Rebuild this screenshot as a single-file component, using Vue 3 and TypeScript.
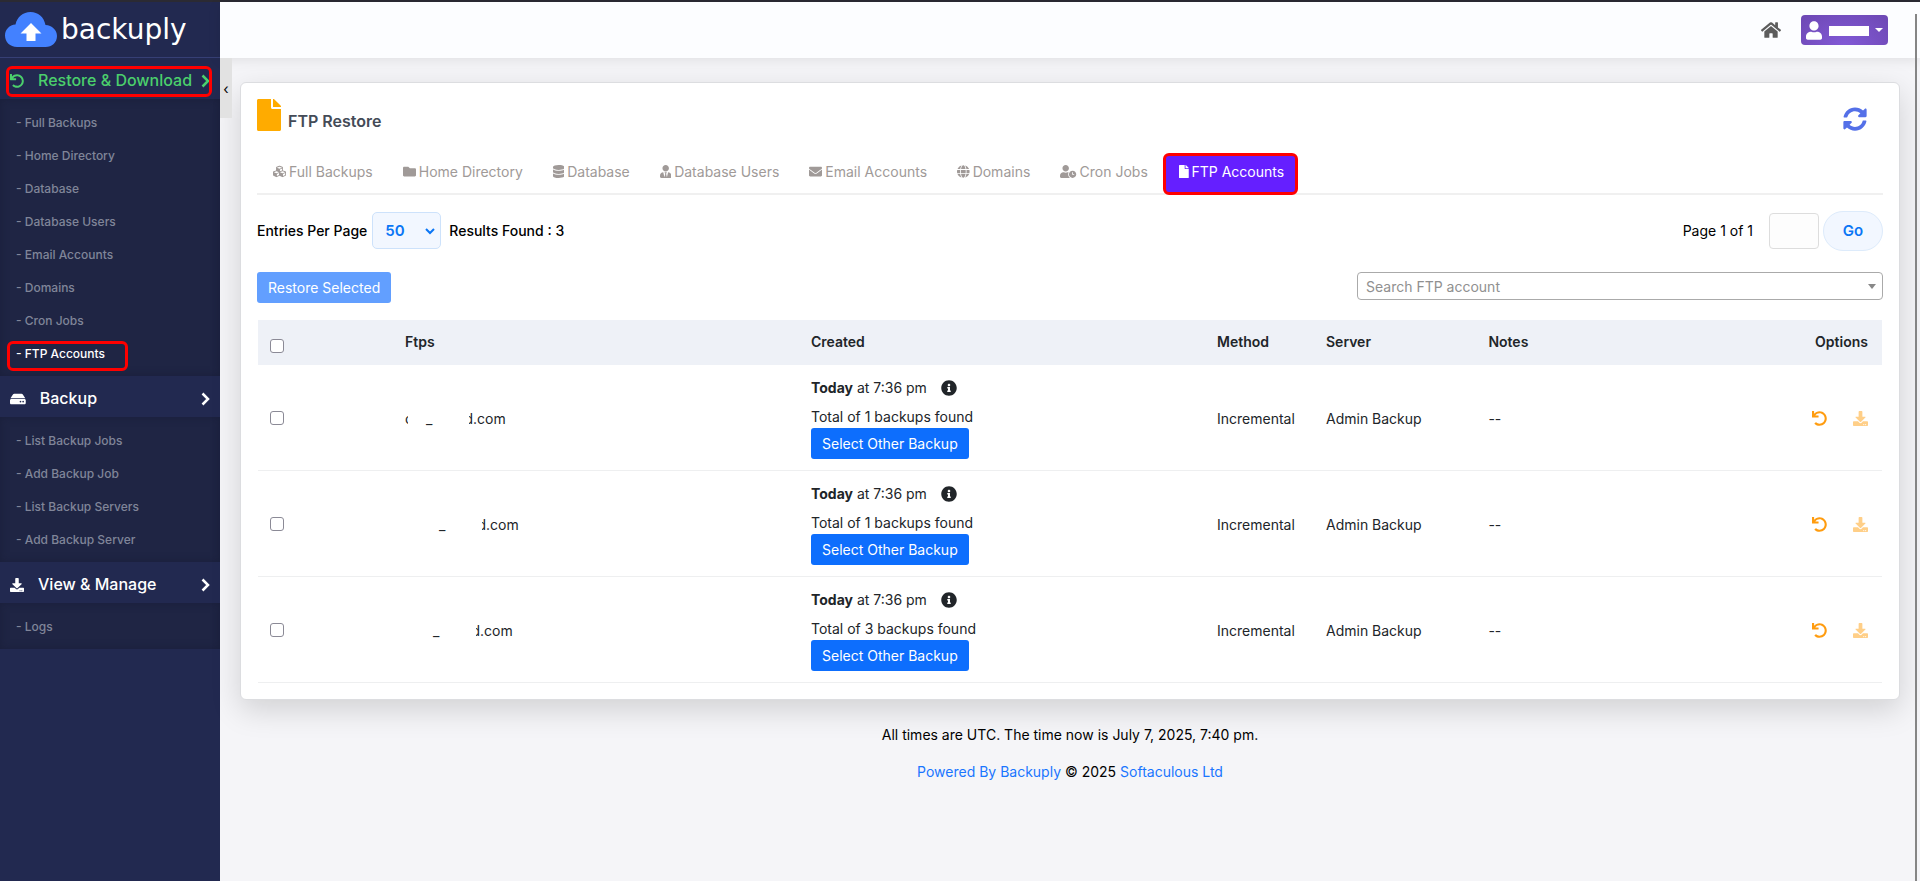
<script setup lang="ts">
import { ref } from 'vue'

interface Icon { w: number; d: string }
interface Group { title: string; icon: string; green?: boolean; items: string[] }
interface Row { lead: string; total: number; stub: boolean }

const icons: Record<string, Icon> = {
  undo: { w: 512, d: 'M212.333 224.333H12c-6.627 0-12-5.373-12-12V12C0 5.373 5.373 0 12 0h48c6.627 0 12 5.373 12 12v78.112C117.773 39.279 184.26 7.47 258.175 8.007c136.906.994 246.448 111.623 246.157 248.532C504.041 393.258 393.12 504 256.333 504c-64.089 0-122.496-24.313-166.51-64.215-5.099-4.622-5.334-12.554-.467-17.42l33.967-33.967c4.474-4.474 11.662-4.717 16.401-.525C170.76 415.336 211.58 432 256.333 432c97.268 0 176-78.716 176-176 0-97.267-78.716-176-176-176-58.496 0-110.28 28.476-142.274 72.333h98.274c6.627 0 12 5.373 12 12v48c0 6.627-5.373 12-12 12z' },
  hdd: { w: 576, d: 'M576 304v96c0 26.51-21.49 48-48 48H48c-26.51 0-48-21.49-48-48v-96c0-26.51 21.49-48 48-48h480c26.51 0 48 21.49 48 48zm-48-80a79.557 79.557 0 0 1 30.777 6.165L462.25 85.374A48.003 48.003 0 0 0 422.311 64H153.689a48 48 0 0 0-39.938 21.374L17.223 230.165A79.557 79.557 0 0 1 48 224h480zm-48 96c-17.673 0-32 14.327-32 32s14.327 32 32 32 32-14.327 32-32-14.327-32-32-32zm-96 0c-17.673 0-32 14.327-32 32s14.327 32 32 32 32-14.327 32-32-14.327-32-32-32z' },
  download: { w: 512, d: 'M216 0h80c13.3 0 24 10.7 24 24v168h87.7c17.8 0 26.7 21.5 14.1 34.1L269.7 378.3c-7.5 7.5-19.8 7.5-27.3 0L90.1 226.1c-12.6-12.6-3.7-34.1 14.1-34.1H192V24c0-13.3 10.7-24 24-24zm296 376v112c0 13.3-10.7 24-24 24H24c-13.3 0-24-10.7-24-24V376c0-13.3 10.7-24 24-24h146.7l49 49c20.1 20.1 52.5 20.1 72.6 0l49-49H488c13.3 0 24 10.7 24 24zm-124 88c0-11-9-20-20-20s-20 9-20 20 9 20 20 20 20-9 20-20zm64 0c0-11-9-20-20-20s-20 9-20 20 9 20 20 20 20-9 20-20z' },
  file: { w: 384, d: 'M224 136V0H24C10.7 0 0 10.7 0 24v464c0 13.3 10.7 24 24 24h336c13.3 0 24-10.7 24-24V160H248c-13.2 0-24-10.8-24-24zm160-14.1v6.1H256V0h6.1c6.4 0 12.5 2.5 17 7l97.9 98c4.5 4.5 7 10.6 7 16.9z' },
  folder: { w: 512, d: 'M464 128H272l-64-64H48C21.49 64 0 85.49 0 112v288c0 26.51 21.49 48 48 48h416c26.51 0 48-21.49 48-48V176c0-26.51-21.49-48-48-48z' },
  database: { w: 448, d: 'M448 73.143v45.714C448 159.143 347.667 192 224 192S0 159.143 0 118.857V73.143C0 32.857 100.333 0 224 0s224 32.857 224 73.143zM448 176v102.857C448 319.143 347.667 352 224 352S0 319.143 0 278.857V176c48.125 33.143 136.208 48.572 224 48.572S399.874 209.143 448 176zm0 160v102.857C448 479.143 347.667 512 224 512S0 479.143 0 438.857V336c48.125 33.143 136.208 48.572 224 48.572S399.874 369.143 448 336z' },
  userTie: { w: 448, d: 'M224 256c70.7 0 128-57.3 128-128S294.7 0 224 0 96 57.3 96 128s57.3 128 128 128zm95.8 32.6L272 480l-32-136 32-56h-96l32 56-32 136-47.8-191.4C56.9 292 0 350.3 0 422.4V464c0 26.5 21.5 48 48 48h352c26.5 0 48-21.5 48-48v-41.6c0-72.1-56.9-130.4-128.2-133.8z' },
  envelope: { w: 512, d: 'M502.3 190.8c3.9-3.1 9.7-.2 9.7 4.7V400c0 26.5-21.5 48-48 48H48c-26.5 0-48-21.5-48-48V195.6c0-5 5.7-7.8 9.7-4.7 22.4 17.4 52.1 39.5 154.1 113.6 21.1 15.4 56.7 47.8 92.2 47.6 35.7.3 72-32.8 92.3-47.6 102-74.1 131.6-96.3 154-113.7zM256 320c23.2.4 56.6-29.2 73.4-41.4 132.7-96.3 142.8-104.7 173.4-128.7 5.8-4.5 9.2-11.5 9.2-18.9v-19c0-26.5-21.5-48-48-48H48c-26.5 0-48 21.5-48 48v19c0 7.4 3.4 14.3 9.2 18.9 30.6 23.9 40.7 32.4 173.4 128.7 16.8 12.2 50.2 41.8 73.4 41.4z' },
  globe: { w: 496, d: 'M336.5 160C322 70.7 287.8 8 248 8s-74 62.7-88.5 152h177zM152 256c0 22.2 1.2 43.5 3.3 64h185.3c2.1-20.5 3.3-41.8 3.3-64s-1.2-43.5-3.3-64H155.3c-2.1 20.5-3.3 41.8-3.3 64zm324.7-96c-28.6-67.9-86.5-120.4-158-141.6 24.4 33.8 41.2 84.7 50 141.6h108zM177.2 18.4C105.8 39.6 47.8 92.1 19.3 160h108c8.7-56.9 25.5-107.8 49.9-141.6zM487.4 192H372.7c2.1 21 3.3 42.5 3.3 64s-1.2 43-3.3 64h114.6c5.5-20.5 8.6-41.8 8.6-64s-3.1-43.5-8.5-64zM120 256c0-21.5 1.2-43 3.3-64H8.6C3.2 212.5 0 233.8 0 256s3.2 43.5 8.6 64h114.6c-2-21-3.2-42.5-3.2-64zm39.5 96c14.5 89.3 48.7 152 88.5 152s74-62.7 88.5-152h-177zm159.3 141.6c71.4-21.2 129.4-73.7 158-141.6h-108c-8.8 56.9-25.6 107.8-50 141.6zM19.3 352c28.6 67.9 86.5 120.4 158 141.6-24.4-33.8-41.2-84.7-50-141.6h-108z' },
  userClock: { w: 640, d: 'M496 224c-79.6 0-144 64.4-144 144s64.4 144 144 144 144-64.4 144-144-64.4-144-144-144zm64 150.3c0 5.3-4.4 9.7-9.7 9.7h-60.6c-5.3 0-9.7-4.4-9.7-9.7v-76.6c0-5.3 4.4-9.7 9.7-9.7h12.6c5.3 0 9.7 4.4 9.7 9.7V352h38.3c5.3 0 9.7 4.4 9.7 9.7v12.6zM320 368c0-27.8 6.7-54.1 18.2-77.5-8-1.5-16.2-2.5-24.6-2.5h-16.7c-22.2 10.2-46.9 16-72.9 16s-50.6-5.8-72.9-16h-16.7C60.2 288 0 348.2 0 422.4V464c0 26.5 21.5 48 48 48h347.1c-45.3-31.9-75.1-84.5-75.1-144zm-96-112c70.7 0 128-57.3 128-128S294.7 0 224 0 96 57.3 96 128s57.3 128 128 128z' },
  user: { w: 448, d: 'M224 256c70.7 0 128-57.3 128-128S294.7 0 224 0 96 57.3 96 128s57.3 128 128 128zm89.6 32h-16.7c-22.2 10.2-46.9 16-72.9 16s-50.6-5.8-72.9-16h-16.7C60.2 288 0 348.2 0 422.4V464c0 26.5 21.5 48 48 48h352c26.5 0 48-21.5 48-48v-41.6c0-74.2-60.2-134.4-134.4-134.4z' },
  info: { w: 512, d: 'M256 8C119.043 8 8 119.083 8 256c0 136.997 111.043 248 248 248s248-111.003 248-248C504 119.083 392.957 8 256 8zm0 110c23.196 0 42 18.804 42 42s-18.804 42-42 42-42-18.804-42-42 18.804-42 42-42zm56 254c0 6.627-5.373 12-12 12h-88c-6.627 0-12-5.373-12-12v-24c0-6.627 5.373-12 12-12h12v-64h-12c-6.627 0-12-5.373-12-12v-24c0-6.627 5.373-12 12-12h64c6.627 0 12 5.373 12 12v100h12c6.627 0 12 5.373 12 12v24z' },
  home: { w: 576, d: 'M280.37 148.26L96 300.11V464a16 16 0 0 0 16 16l112.06-.29a16 16 0 0 0 15.92-16V368a16 16 0 0 1 16-16h64a16 16 0 0 1 16 16v95.64a16 16 0 0 0 16 16.05L464 480a16 16 0 0 0 16-16V300L295.67 148.26a12.19 12.19 0 0 0-15.3 0zM571.6 251.47L488 182.56V44.05a12 12 0 0 0-12-12h-56a12 12 0 0 0-12 12v72.61L318.47 43a48 48 0 0 0-61 0L4.34 251.47a12 12 0 0 0-1.6 16.9l25.5 31A12 12 0 0 0 45.15 301l235.22-193.74a12.19 12.19 0 0 1 15.3 0L530.9 301a12 12 0 0 0 16.9-1.6l25.5-31a12 12 0 0 0-1.7-16.93z' },
  sync: { w: 512, d: 'M370.72 133.28C339.458 104.008 298.888 87.962 255.848 88c-77.458.068-144.328 53.178-162.791 126.85-1.344 5.363-6.122 9.15-11.651 9.15H24.103c-7.498 0-13.194-6.807-11.807-14.176C33.933 94.924 134.813 8 256 8c66.448 0 126.791 26.136 171.315 68.685L463.03 40.97C478.149 25.851 504 36.559 504 57.941V192c0 13.255-10.745 24-24 24H345.941c-21.382 0-32.09-25.851-16.971-40.971l41.75-41.749zM32 296h134.059c21.382 0 32.09 25.851 16.971 40.971l-41.75 41.75c31.262 29.273 71.835 45.319 114.876 45.28 77.418-.07 144.315-53.144 162.787-126.849 1.344-5.363 6.122-9.15 11.651-9.15h57.304c7.498 0 13.194 6.807 11.807 14.176C478.067 417.076 377.187 504 256 504c-66.448 0-126.791-26.136-171.315-68.685L48.97 471.03C33.851 486.149 8 475.441 8 454.059V320c0-13.255 10.745-24 24-24z' },
  cubes: { w: 512, d: 'M488.6 250.2L392 214V105.5c0-15-9.3-28.4-23.4-33.7l-100-37.5c-8.1-3.1-17.1-3.1-25.3 0l-100 37.5c-14.1 5.3-23.4 18.7-23.4 33.7V214l-96.6 36.2C9.3 255.5 0 268.9 0 283.9V394c0 13.6 7.7 26.1 19.9 32.2l100 50c10.1 5.1 22.1 5.1 32.2 0l103.9-52 103.9 52c10.1 5.1 22.1 5.1 32.2 0l100-50c12.2-6.1 19.9-18.6 19.9-32.2V283.9c0-15-9.3-28.4-23.4-33.7zM358 214.8l-85 31.9v-68.2l85-37v73.3zM154 104.1l102-38.2 102 38.2v.6l-102 41.4-102-41.4v-.6zm84 291.1l-85 42.5v-79.1l85-38.8v75.4zm0-112l-102 41.4-102-41.4v-.6l102-38.2 102 38.2v.6zm240 112l-85 42.5v-79.1l85-38.8v75.4zm0-112l-102 41.4-102-41.4v-.6l102-38.2 102 38.2v.6z' },
}
const box = (name: string) => `0 0 ${icons[name].w} 512`

const groups: Group[] = [
  { title: 'Restore & Download', icon: 'undo', green: true, items: ['Full Backups', 'Home Directory', 'Database', 'Database Users', 'Email Accounts', 'Domains', 'Cron Jobs', 'FTP Accounts'] },
  { title: 'Backup', icon: 'hdd', items: ['List Backup Jobs', 'Add Backup Job', 'List Backup Servers', 'Add Backup Server'] },
  { title: 'View & Manage', icon: 'download', items: ['Logs'] },
]
const current = 'FTP Accounts'

const tabs = [
  { label: 'Full Backups', icon: 'cubes' },
  { label: 'Home Directory', icon: 'folder' },
  { label: 'Database', icon: 'database' },
  { label: 'Database Users', icon: 'userTie' },
  { label: 'Email Accounts', icon: 'envelope' },
  { label: 'Domains', icon: 'globe' },
  { label: 'Cron Jobs', icon: 'userClock' },
  { label: 'FTP Accounts', icon: 'file' },
]

const rows: Row[] = [
  { lead: 'near', total: 1, stub: true },
  { lead: 'far', total: 1, stub: false },
  { lead: 'mid', total: 3, stub: false },
]

const perPage = ref('50')
const pageNo = ref('')
const account = ref('')
</script>

<template>
  <div class="app">
    <aside class="sidebar">
      <a class="brand" href="#">
        <svg class="cloud" viewBox="0 0 52 36" aria-hidden="true">
          <path fill="#4381ff" d="M12 35C5 35 0 30 0 23.500C0 17.500 4.500 13 10.500 12.500C12 5 18 0 25.500 0C33 0 39 5 40.500 13C47 13.500 52 18 52 24C52 30.500 47 35 40.500 35Z" />
          <path fill="#fff" d="M26 11L36.500 21.500H30.500V29H21.500V21.500H15.500Z" />
        </svg>
        <span>backuply</span>
      </a>
      <nav>
        <section v-for="g in groups" :key="g.title">
          <button type="button" class="group" :class="{ green: g.green, marked: g.green }">
            <svg class="gicon" :viewBox="box(g.icon)" aria-hidden="true"><path :d="icons[g.icon].d" /></svg>
            <span class="gtitle">{{ g.title }}</span>
            <svg class="chev" viewBox="0 0 9 14" aria-hidden="true"><path d="M1.500 1.500L7 7L1.500 12.500" /></svg>
          </button>
          <ul>
            <li v-for="i in g.items" :key="i">
              <a href="#" :class="{ current: i === current, marked: i === current }">- {{ i }}</a>
            </li>
          </ul>
        </section>
      </nav>
    </aside>

    <div class="main">
      <header class="topbar">
        <a href="#" class="home" aria-label="Home"><svg :viewBox="box('home')"><path :d="icons.home.d" /></svg></a>
        <button type="button" class="account" aria-label="Account menu">
          <svg :viewBox="box('user')"><path :d="icons.user.d" /></svg>
          <span class="masked"></span>
          <span class="caret"></span>
        </button>
      </header>
      <button type="button" class="collapse" aria-label="Collapse sidebar">‹</button>

      <main class="card">
        <div class="head">
          <h1><svg :viewBox="box('file')" aria-hidden="true"><path :d="icons.file.d" /></svg><span>FTP Restore</span></h1>
          <button type="button" class="refresh" aria-label="Refresh"><svg :viewBox="box('sync')"><path :d="icons.sync.d" /></svg></button>
        </div>

        <nav class="tabs">
          <a v-for="t in tabs" :key="t.label" href="#" :class="{ active: t.label === current }">
            <svg :viewBox="box(t.icon)" aria-hidden="true"><path :d="icons[t.icon].d" /></svg><span>{{ t.label }}</span>
          </a>
        </nav>

        <div class="bar paging">
          <div class="entries">
            <label for="per-page">Entries Per Page</label>
            <span class="pick">
              <select id="per-page" v-model="perPage"><option>10</option><option>50</option><option>100</option></select>
              <svg viewBox="0 0 10 7" aria-hidden="true"><path d="M1 1L5 5L9 1" /></svg>
            </span>
            <span>Results Found : 3</span>
          </div>
          <form class="pager" @submit.prevent>
            <label for="page-no">Page 1 of 1</label>
            <input id="page-no" v-model="pageNo" type="text">
            <button type="submit">Go</button>
          </form>
        </div>

        <div class="bar actions">
          <button type="button" class="primary" disabled>Restore Selected</button>
          <span class="search">
            <select v-model="account" aria-label="Search FTP account"><option value="">Search FTP account</option></select>
            <span class="caret"></span>
          </span>
        </div>

        <div class="list">
          <table>
            <colgroup><col class="c-check"><col class="c-wide"><col class="c-wide"><col class="c-method"><col class="c-server"><col><col class="c-opts"></colgroup>
            <thead>
              <tr>
                <th><input type="checkbox" aria-label="Select all"></th>
                <th>Ftps</th><th>Created</th><th>Method</th><th>Server</th><th>Notes</th><th class="right">Options</th>
              </tr>
            </thead>
            <tbody>
              <tr v-for="(r, n) in rows" :key="n">
                <td><input type="checkbox" :aria-label="`Select row ${n + 1}`"></td>
                <td>
                  <span class="ftp">
                    <span v-if="r.stub" class="stub">c</span>
                    <span class="under" :class="r.lead">_</span>
                    <span class="domain">d.com</span>
                  </span>
                </td>
                <td>
                  <p class="when"><span><b>Today</b> at 7:36 pm</span><svg :viewBox="box('info')" aria-hidden="true"><path :d="icons.info.d" /></svg></p>
                  <p class="found">Total of {{ r.total }} backups found</p>
                  <button type="button" class="primary">Select Other Backup</button>
                </td>
                <td>Incremental</td>
                <td>Admin Backup</td>
                <td>--</td>
                <td class="right">
                  <span class="opts">
                    <button type="button" aria-label="Restore"><svg :viewBox="box('undo')"><path :d="icons.undo.d" /></svg></button>
                    <button type="button" aria-label="Download" disabled><svg :viewBox="box('download')"><path :d="icons.download.d" /></svg></button>
                  </span>
                </td>
              </tr>
            </tbody>
          </table>
        </div>
      </main>

      <footer>
        <p>All times are UTC. The time now is July 7, 2025, 7:40 pm.</p>
        <p><a href="#">Powered By Backuply</a> © 2025 <a href="#">Softaculous Ltd</a></p>
      </footer>
    </div>
    <span class="scroll-thumb"></span>
  </div>
</template>

<style>
body { background: #f5f5f8; }
</style>

<style scoped>
.app, .app * { box-sizing: border-box; }
.app {
  position: relative;
  display: flex;
  min-height: 100vh;
  border-top: 2px solid #2b2a33;
  font: 14px/21px Inter, "Open Sans", sans-serif;
  color: #000;
}
.app button, .app input, .app select { font: inherit; }
button { margin: 0; padding: 0; border: 0; background: none; color: inherit; cursor: pointer; }
a { color: #1a76ff; text-decoration: none; }
p, ul, h1 { margin: 0; padding: 0; }
svg { display: block; fill: currentColor; }

.sidebar { flex: 0 0 220px; background: #222950; color: #fff; }
.brand { display: flex; align-items: center; gap: 4px; height: 56px; padding: 0 5px; border-bottom: 1px solid #363f75; color: #fff; font: 28px/32px "DejaVu Sans", sans-serif; }
.cloud { width: 52px; height: 36px; }
.app .group { position: relative; display: flex; align-items: center; width: 100%; height: 41px; padding: 4px 10px 0; font-size: 16px; font-weight: 500; text-align: left; }
.group.green { color: #4bcf6c; }
.gicon { height: 14px; }
.gtitle { flex: 1; padding-left: 14px; }
.chev { width: 9px; height: 14px; fill: none; stroke: currentColor; stroke-width: 2.500; }
ul { list-style: none; padding: 7px 0 6px; background: #1f2544; box-shadow: inset 0 0 8px #1a1f3b; }
li { height: 33px; padding-left: 16px; line-height: 33px; font-size: 12px; font-weight: 500; }
li a { position: relative; color: #808599; }
li a.current { color: #fff; }
.marked::after { content: ""; position: absolute; border: 3px solid #f00; border-radius: 6px; pointer-events: none; }
.group.marked::after { inset: 8px 8px 2px 6px; }
li .marked::after { inset: -5px -23px -10px -9px; }

.main { position: relative; flex: 1; min-width: 0; }
.topbar { display: flex; align-items: center; justify-content: flex-end; gap: 20px; height: 56px; padding-right: 32px; background: #fcfdff; box-shadow: 0 2px 12px #00000018; }
.home { color: #5c5c5c; }
.home svg { width: 20px; height: 18px; }
.account { display: flex; align-items: center; gap: 6px; height: 30px; padding: 0 5px; border-radius: 4px; color: #fff; background: radial-gradient(ellipse at bottom, #8259d6, #6d48b3); }
.account svg { width: 16px; height: 19px; }
.masked { width: 40px; height: 10px; margin: 2px 0 0 1px; background: #fff; }
.caret { border: 4px solid transparent; border-top-color: currentColor; border-bottom: 0; }
.collapse { position: absolute; top: 56px; left: 0; width: 12px; height: 60px; background: #e2e2e2; color: #000; font-weight: 700; }

.card { margin: 24px 20px 0; padding: 16px; border: 1px solid #dcdde0; border-radius: 6px; background: #fff; box-shadow: 0 10px 30px #00000026; }
.head { display: flex; align-items: flex-start; justify-content: space-between; height: 54px; }
h1 { display: flex; align-items: flex-start; gap: 7px; color: #444b57; font-size: 16px; font-weight: 600; line-height: 21px; }
h1 span { padding-top: 12px; }
h1 svg { width: 24px; height: 32px; color: #ffab00; }
.refresh { margin: 8px 16px 0 0; color: #5470e8; }
.refresh svg { width: 24px; height: 24px; }

.tabs { display: flex; padding-left: 1px; border-bottom: 2px solid #f0f0f0; }
.tabs a { display: flex; align-items: center; gap: 3px; height: 40px; padding: 0 15px 3px; color: #a09a98; }
.tabs svg { height: 13px; }
.tabs .active { height: 42px; margin-bottom: -2px; padding: 0 11px 5px 13px; border: 3px solid #f00; border-radius: 6px; background: #651fff; color: #fff; }

.bar { display: flex; align-items: center; justify-content: space-between; }
.paging { height: 77px; padding-bottom: 6px; }
.entries { display: flex; align-items: center; gap: 5px; font-weight: 500; }
.pick { position: relative; margin-right: 3px; }
.pick select { display: block; appearance: none; width: 69px; height: 37px; padding: 0 12px; border: 1px solid #cde2fb; border-radius: 5px; background: #f2f7ff; color: #0a76f5; font-size: 15px; font-weight: 600; }
.pick svg { position: absolute; top: 16px; right: 6px; width: 10px; height: 7px; fill: none; stroke: #0a76f5; stroke-width: 2; pointer-events: none; }
.pager { display: flex; align-items: center; gap: 4px; }
.pager label { margin-right: 12px; }
.pager input { width: 50px; height: 36px; border: 1px solid #ddd; border-radius: 4px; background: #fdfdfd; }
.app .pager button { width: 60px; height: 40px; border: 1px solid #ddebfb; border-radius: 20px; background: #f2f7ff; color: #0a76f5; font-size: 15px; font-weight: 600; }
.actions { align-items: flex-start; height: 48px; }
.primary { height: 31px; padding: 0 11px; border-radius: 3px; background: #0d6efd; color: #fff; }
.primary:disabled { background: #629fff; }
.search { position: relative; flex: 0 1 526px; }
.search select { display: block; appearance: none; width: 100%; height: 28px; padding: 0 8px; border: 1px solid #aaa; border-radius: 4px; background: #fff; color: #909090; }
.search .caret { position: absolute; top: 12px; right: 7px; color: #888; pointer-events: none; border-top-width: 5px; }

.list { padding: 0 1px; }
table { width: 100%; table-layout: fixed; border-collapse: separate; border-spacing: 0; color: #212529; }
.c-check { width: 135px; }
.c-wide { width: 25%; }
.c-method { width: 109px; }
.c-server { width: 10%; }
.c-opts { width: 100px; }
th { height: 45px; padding: 0 12px 2px; background: #eef1f7; font-weight: 600; text-align: left; }
td { padding: 12px 12px 11px; border-bottom: 1px solid #eeeff0; vertical-align: middle; }
.right { padding-right: 14px; text-align: right; }
input[type="checkbox"] { display: block; width: 14px; height: 14px; margin: 0; appearance: none; border: 1px solid #8b8a96; border-radius: 3px; background: #fff; }
th input[type="checkbox"] { margin-top: 8px; }
.when { display: flex; align-items: center; gap: 14px; margin-bottom: 8px; }
.when svg { width: 16px; height: 16px; }
.found { margin-bottom: 1px; }
.ftp { display: flex; }
.stub, .domain { position: relative; }
.stub::after, .domain::before { content: ""; position: absolute; top: 0; bottom: 0; background: #fff; }
.stub::after { left: 3px; right: 0; }
.domain::before { left: 0; width: 5px; }
.under { margin-right: 32px; }
.under.near { margin-left: 13px; }
.under.far { margin-left: 34px; }
.under.mid { margin-left: 28px; }
.opts { display: flex; gap: 26px; justify-content: flex-end; }
.opts button { color: #ff9c0f; }
.opts button:disabled { color: #ffcf88; }
.opts svg { width: 15px; height: 15px; }

footer { padding: 24px 0; text-align: center; }
footer p + p { margin-top: 16px; }
.scroll-thumb { position: absolute; top: 12px; right: 3px; bottom: 0; width: 2px; background: #858585; }
</style>
